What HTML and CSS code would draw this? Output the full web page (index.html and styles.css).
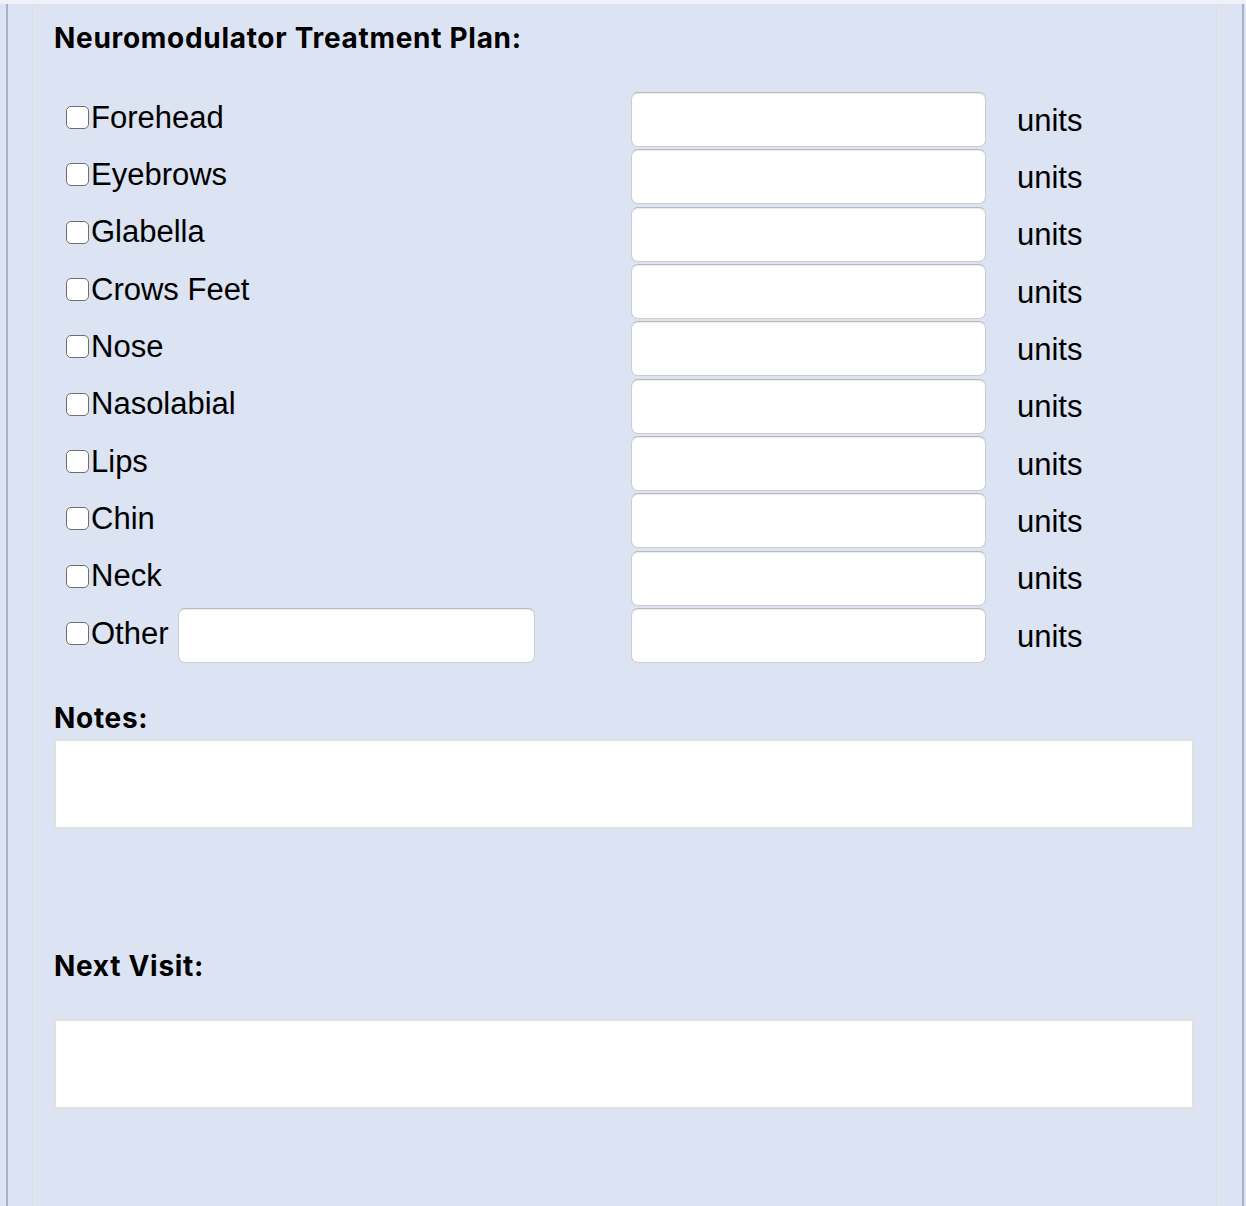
FILE: index.html
```html
<!DOCTYPE html>
<html lang="en">
	<head>
		<meta charset="UTF-8" />
		<meta name="viewport" content="width=device-width, initial-scale=1.0" />
		<title>Neuromodulator Treatment Plan</title>
		<link rel="stylesheet" href="styles.css">
	</head>
	<body>
		<div class="panel">
			<div class="seccion">
				<h2 class="titulo">Neuromodulator Treatment Plan:</h2>

				<div class="zonas">
					<label class="zona"><input type="checkbox" />Forehead</label>
					<input class="dosis" type="text" />
					<span class="unidad">units</span>

					<label class="zona"><input type="checkbox" />Eyebrows</label>
					<input class="dosis" type="text" />
					<span class="unidad">units</span>

					<label class="zona"><input type="checkbox" />Glabella</label>
					<input class="dosis" type="text" />
					<span class="unidad">units</span>

					<label class="zona"><input type="checkbox" />Crows Feet</label>
					<input class="dosis" type="text" />
					<span class="unidad">units</span>

					<label class="zona"><input type="checkbox" />Nose</label>
					<input class="dosis" type="text" />
					<span class="unidad">units</span>

					<label class="zona"><input type="checkbox" />Nasolabial</label>
					<input class="dosis" type="text" />
					<span class="unidad">units</span>

					<label class="zona"><input type="checkbox" />Lips</label>
					<input class="dosis" type="text" />
					<span class="unidad">units</span>

					<label class="zona"><input type="checkbox" />Chin</label>
					<input class="dosis" type="text" />
					<span class="unidad">units</span>

					<label class="zona"><input type="checkbox" />Neck</label>
					<input class="dosis" type="text" />
					<span class="unidad">units</span>

					<div class="zona">
						<label><input type="checkbox" />Other</label>
						<input class="dosis otra" type="text" />
					</div>
					<input class="dosis" type="text" />
					<span class="unidad">units</span>
				</div>

				<h2 class="titulo notas-titulo">Notes:</h2>
				<textarea class="caja"></textarea>

				<h2 class="titulo visita-titulo">Next Visit:</h2>
				<textarea class="caja"></textarea>
			</div>
		</div>
	</body>
</html>
```

FILE: styles.css
```css
body {
	margin: 0;
	padding: 0;
	background-color: #dce3f2;
	border-top: 4px solid #eef1f8;
	font-family: "Liberation Sans", Arial, sans-serif;
	color: #000;
}
.panel {
	margin-left: 6px;
	width: 1234px;
	border-left: 2px solid #a6b1cd;
	border-right: 2px solid #a6b1cd;
	min-height: 1202px;
}
.seccion {
	margin-left: 24px;
	width: 1140px;
	border-left: 1px solid #e1ded9;
	border-right: 1px solid #e1ded9;
	padding: 17px 22px 60px 21px;
	min-height: 1125px;
}
.titulo {
	font-family: Inter, "Liberation Sans", sans-serif;
	font-weight: 700;
	font-size: 28px;
	letter-spacing: 0.7px;
	line-height: 34px;
	margin: 0;
}
.zonas {
	display: grid;
	grid-template-columns: 565px 355px auto;
	grid-auto-rows: 57.33px;
	align-items: center;
	margin-top: 36px;
	padding-left: 12px;
}
.zona {
	display: flex;
	align-items: center;
	font-size: 31px;
	line-height: 36px;
	padding-bottom: 4px;
}
.zona label {
	display: flex;
	align-items: center;
}
input[type="checkbox"] {
	appearance: none;
	width: 23px;
	height: 23px;
	margin: 0 2px 0 0;
	border: 1px solid #6e6e6e;
	border-radius: 5px;
	background-color: #fff;
}
.dosis {
	box-sizing: border-box;
	width: 355px;
	height: 55px;
	border: 1px solid #cdcdcd;
	border-top-color: #b9b9b9;
	border-radius: 7px;
	background-color: #fff;
	box-shadow: inset 0 1px 1px rgba(0, 0, 0, 0.08);
	font-size: 20px;
	padding: 0 10px;
}
.otra {
	width: 357px;
	margin-left: 9px;
	margin-bottom: -4px;
}
.unidad {
	font-size: 31px;
	line-height: 36px;
	margin-left: 31px;
	padding-top: 2px;
}
.notas-titulo {
	margin-top: 37px;
}
.caja {
	display: block;
	box-sizing: border-box;
	width: 1140px;
	height: 90px;
	margin-top: 4px;
	border: 2px solid #e0e0e0;
	border-radius: 0;
	background-color: #fff;
	resize: none;
}
.visita-titulo {
	margin-top: 120px;
	margin-bottom: 36px;
}
```
